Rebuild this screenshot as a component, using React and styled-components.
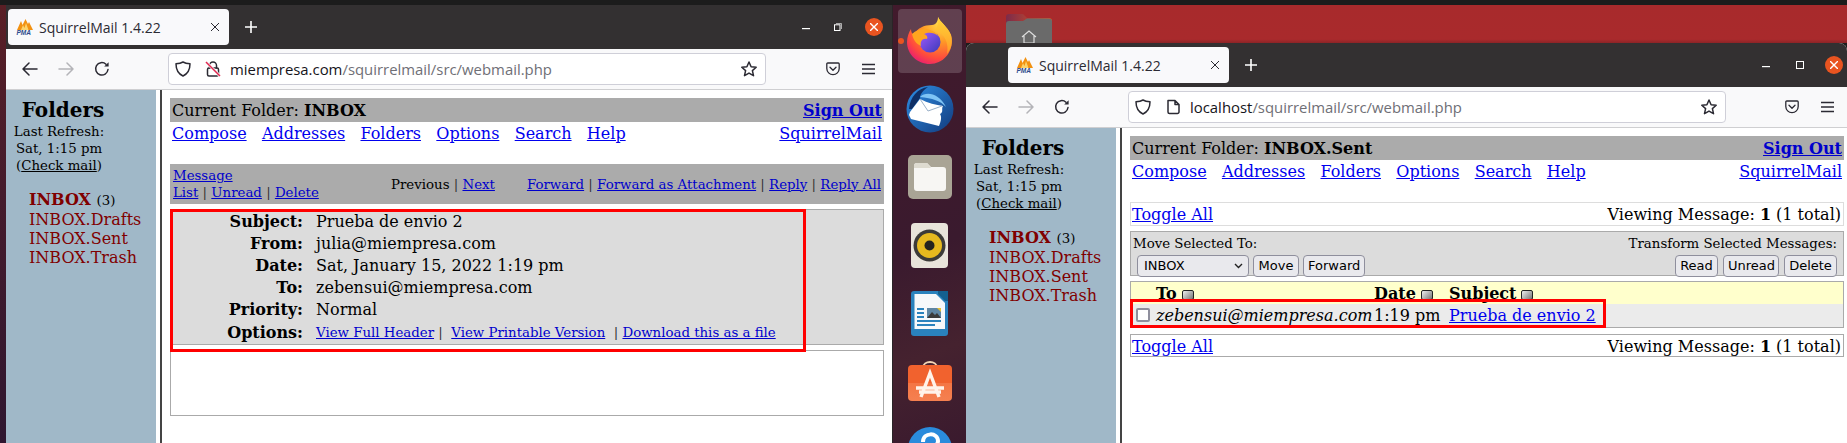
import React from "react";
import styled, { createGlobalStyle } from "styled-components";

const Global = createGlobalStyle`
  html, body { margin: 0; padding: 0; background: #1c1c1c; }
  * { box-sizing: border-box; }
`;

const serif = `"DejaVu Serif", serif`;
const ui = `"Open Sans", "Noto Sans", sans-serif`;

const Screen = styled.div`
  width: 1847px; height: 443px; overflow: hidden;
  display: flex; flex-direction: column; background: #1c1c1c;
`;
const TopStrip = styled.div`height: 5px; flex: none; background: #1c1c1c;`;
const Desktop = styled.div`flex: 1; min-height: 0; display: flex;`;
const EdgeStrip = styled.div`
  width: 6px; flex: none;
  background: linear-gradient(180deg, #5a1f25 0%, #4a1c2b 30%, #2f1630 100%);
`;
const WindowFrame = styled.div`
  width: ${p => p.$width}px; flex: ${p => (p.$fill ? "1 1 auto" : "none")}; min-height: 0;
  display: flex; flex-direction: column;
  border-radius: ${p => (p.$rounded ? "8px 8px 0 0" : "0")};
  overflow: hidden; background: #fff;
`;
const TitleBar = styled.div`
  height: 44px; flex: none; background: #333031;
  display: flex; align-items: center;
  padding-left: ${p => p.$tabLeft}px; padding-right: ${p => p.$right}px;
`;
const Tab = styled.div`
  width: 221px; height: 36px; background: #f9f9fb; border-radius: 4px;
  display: flex; align-items: center; padding: 0 10px 0 8px; gap: 5px;
  font: 14px ${ui}; color: #2b2a33;
`;
const TabTitle = styled.span`flex: 1; white-space: nowrap;`;
const NewTab = styled.div`margin-left: 16px; display: flex; align-items: center; width: 18px; height: 18px;`;
const WinControls = styled.div`
  margin-left: auto; display: flex; align-items: center;
`;
const WinBtn = styled.div`
  width: 18px; height: 18px; margin-left: ${p => p.$gap}px; display: flex;
  align-items: center; justify-content: center;
`;
const CloseBtn = styled(WinBtn)`background: #e95420; border-radius: 50%; `;
const Toolbar = styled.div`
  height: 41px; flex: none; background: #f9f9fa; border-bottom: 1px solid #cfcfd1;
  display: flex; align-items: center; padding-left: 14px; padding-right: ${p => p.$right}px;
`;
const NavBtn = styled.div`
  width: 20px; height: 20px; margin-right: 16px; display: flex; align-items: center; justify-content: center;
`;
const UrlBox = styled.div`
  width: 598px; height: 32px; margin-left: 40px; margin-top: -1px; background: #fff;
  border: 1px solid #cfcfd8; border-radius: 4px; flex: none;
  display: flex; align-items: center; padding: 0 8px 0 6px;
  font: 14.9px ${ui}; white-space: nowrap;
`;
const UrlIcon = styled.span`display: flex; margin-right: ${p => p.$gap}px;`;
const Host = styled.span`color: #15141a;`;
const UrlPath = styled.span`color: #6f6f76; flex: 1;`;
const ToolIcons = styled.div`margin-left: auto; display: flex; align-items: center; gap: 22px;`;
const PageGrid = styled.div`
  flex: 1; min-height: 0; display: grid; grid-template-columns: 150px 4px 2px 1fr; background: #fff;
  font: 16px/19px ${serif}; color: #000;
`;
const FolderPane = styled.div`background: #a0b8c8; padding-top: 8px;`;
const FolderHead = styled.div`
  width: 114px; text-align: center; font: bold 20px/24px ${serif};
`;
const RefreshInfo = styled.div`
  width: 106px; text-align: center; font: 13.33px/17px ${serif}; margin-top: 1px; color: #000;
`;
const CheckLink = styled.a`color: #000; text-decoration: underline;`;
const FolderList = styled.div`margin: 17px 0 0 23px; display: flex; flex-direction: column;`;
const FolderItem = styled.div`color: #800000; font-size: 16px; line-height: ${p => (p.$active ? 18 : 19)}px; font-weight: ${p => (p.$active ? 700 : 400)};`;
const UnreadCount = styled.span`color: #000; font-size: 13.33px; font-weight: 400;`;
const WhiteGap = styled.div`background: #fff;`;
const Divider = styled.div`background: #444;`;
const Main = styled.div`
  position: relative; padding: 8px ${p => p.$right}px 0 8px; display: flex; flex-direction: column;
`;
const FolderBar = styled.div`
  height: 24px; background: #ababab; display: flex; justify-content: space-between; align-items: center; padding: 0 2px;
`;
const Link = styled.a`color: ${p => p.$color || "#0000ee"}; text-decoration: underline; font-weight: ${p => (p.$bold ? 700 : 400)};`;
const NavRow = styled.div`
  height: 42px; display: flex; padding: 2px 2px 0; justify-content: space-between;
`;
const NavLinks = styled.div`display: flex; gap: 15.3px;`;
const MsgBar = styled.div`
  height: 40px; background: #ababab; display: grid; grid-template-columns: 218px auto 1fr;
  align-items: center; padding: 3px 3px 3px 3px; font-size: 13.33px; line-height: 17px;
`;
const Sep = styled.span`color: #333;`;
const MsgRight = styled.div`justify-self: end; white-space: nowrap;`;
const HeaderBox = styled.div`
  margin-top: 5px; height: 136px; background: #dcdcdc; border: 1px solid #aaa;
  padding-top: 1px; display: grid; grid-template-columns: 132px 1fr; grid-auto-rows: 22px; column-gap: 13px;
`;
const HeadLabel = styled.div`font-weight: 700; text-align: right; line-height: 22px; padding-top: ${p => p.$nudge || 0}px;`;
const HeadValue = styled.div`line-height: 21px; white-space: pre;`;
const OptionLinks = styled.div`font-size: 13.33px; line-height: 22px; white-space: pre; padding-top: 1px;`;
const BodyBox = styled.div`margin-top: 5px; height: 66px; border: 1px solid #aaa; background: #fff;`;
const ToggleBar = styled.div`
  height: ${p => p.$h}px; border: 1px solid ${p => p.$border}; margin-top: ${p => p.$top}px;
  display: flex; justify-content: space-between; align-items: center; padding: ${p => p.$padTop}px 2px 0 1px; background: #fff;
`;
const MoveBar = styled.div`
  height: 45px; margin-top: 5px; background: #dcdcdc; border: 1px solid #aaa;
  display: flex; justify-content: space-between; font-size: 13.33px; padding: 2px 6px 0 2px;
`;
const MoveCol = styled.div`display: flex; flex-direction: column; gap: 2px; align-items: ${p => p.$end ? "flex-end" : "flex-start"}; line-height: 19px;`;
const Controls = styled.div`display: flex; gap: ${p => p.$gap}px; padding-left: ${p => p.$left}px;`;
const FormButton = styled.div`
  height: 22px; padding: 0 4px; background: #e9e9ed; border: 1px solid #8f8f9d; border-radius: 4px;
  font: 13px/20px "DejaVu Sans", sans-serif; color: #000; text-align: center; width: ${p => p.$w}px;
`;
const FakeSelect = styled(FormButton)`
  width: 112px; display: flex; align-items: center; justify-content: space-between; padding: 0 5px 0 6px;
`;
const ListBox = styled.div`margin-top: 5px; height: 47px; border: 1px solid #aaa; background: #ebebeb; padding-bottom: 1px;`;
const ListRow = styled.div`
  display: grid; grid-template-columns: 25px 218px 75px 1fr; height: ${p => p.$h}px; background: ${p => p.$bg};
  align-items: center; white-space: nowrap;
`;
const SortHead = styled.div`font-weight: 700; display: flex; align-items: center; gap: 5px; line-height: 22px; padding-top: 1px;`;
const SortBtn = styled.span`
  width: 12px; height: 10px; border: 1px solid #222; border-radius: 2px; margin-top: 1px;
  background: linear-gradient(135deg, #eee, #777);
`;
const Checkbox = styled.span`
  width: 14px; height: 14px; border: 2px solid #8f8f9d; border-radius: 2px; background: #fff; margin-left: 5px; display: block;
`;
const Sender = styled.span`font-style: italic;`;
const RedBox = styled.div`
  position: absolute; pointer-events: none; border: 3px solid #ff0000;
  left: 8px; top: ${p => p.$top}px; width: ${p => p.$w}px; height: ${p => p.$h}px;
`;
const Dock = styled.div`
  width: 74px; flex: none; display: flex; flex-direction: column; align-items: center; gap: 4px; padding-top: 4px;
  background: linear-gradient(160deg, #421a2c 0%, #3a1a2e 55%, #45222f 78%, #3a1a2e 100%);
  border-left: 1px solid #2a2427;
`;
const DockSlot = styled.div`
  position: relative; width: 64px; height: 64px; flex: none; border-radius: 4px;
  display: flex; align-items: center; justify-content: center;
  background: ${p => (p.$active ? "rgba(255,255,255,.17)" : "transparent")};
`;
const RunDot = styled.span`
  position: absolute; left: 0; top: 29px; width: 6px; height: 6px; border-radius: 50%; background: #e95420;
`;
const RightDesk = styled.div`flex: 1; min-width: 0; min-height: 0; display: flex; flex-direction: column;`;
const Wallpaper = styled.div`
  height: 38px; flex: none; overflow: hidden; padding: 9px 0 0 40px;
  background: linear-gradient(180deg, #a82a2c 0%, #a92a2c 90%, #8c2427 100%);
`;

const IconS = { fill: "none", stroke: "#2b2a33", strokeWidth: 1.5, strokeLinecap: "round", strokeLinejoin: "round" };

const Favicon = () => (
  <svg width="18" height="18" viewBox="0 0 18 18">
    <path d="M1 12 L5 3 L6.5 7 L9.5 1 L12 6 L13 4 L17 12 Z" fill="#f29111" />
    <path d="M5 12 L7 7 L8.5 10 L10 5 L12.5 12 Z" fill="#fbd26a" />
    <text x="0.5" y="17" fontSize="6.5" fontWeight="700" fontStyle="italic" fontFamily="Liberation Sans, sans-serif" fill="#2c4a8c">PMA</text>
  </svg>
);
const Back = ({ c = "#2b2a33", flip }) => (
  <svg width="16" height="14" viewBox="0 0 16 14" style={flip ? { transform: "scaleX(-1)" } : undefined}>
    <path d="M7 1 L1 7 L7 13 M1 7 H15" {...IconS} stroke={c} />
  </svg>
);
const Reload = () => (
  <svg width="16" height="16" viewBox="0 0 16 16">
    <path d="M14 8.5 A6.2 6.2 0 1 1 12 3.2" {...IconS} />
    <path d="M14.6 1.2 V5.6 H10.2 Z" fill="#2b2a33" />
  </svg>
);
const Shield = () => (
  <svg width="16" height="16" viewBox="0 0 16 16">
    <path d="M8 1 C10 2.2 12 2.6 15 2.8 C15 9 12.5 13 8 15 C3.5 13 1 9 1 2.8 C4 2.6 6 2.2 8 1 Z" {...IconS} />
  </svg>
);
const BrokenLock = () => (
  <svg width="16" height="16" viewBox="0 0 16 16">
    <path d="M4.5 7 V4.5 A3.5 3.5 0 0 1 11.5 4.5 V7" {...IconS} />
    <rect x="2.5" y="7" width="11" height="8" rx="1.5" {...IconS} />
    <path d="M1 1 L15 15" stroke="#f9f9fa" strokeWidth="3" />
    <path d="M1 1 L15 15" stroke="#e22850" strokeWidth="1.5" />
  </svg>
);
const PageIcon = () => (
  <svg width="16" height="16" viewBox="0 0 16 16">
    <path d="M3 1.5 H10 L14 5.5 V13 A1.5 1.5 0 0 1 12.5 14.5 H4.5 A1.5 1.5 0 0 1 3 13 Z M10 1.5 V5.5 H14" {...IconS} />
  </svg>
);
const Star = () => (
  <svg width="16" height="16" viewBox="0 0 16 16">
    <path d="M8 1 L10.1 5.7 L15.2 6.2 L11.4 9.6 L12.5 14.7 L8 12.1 L3.5 14.7 L4.6 9.6 L0.8 6.2 L5.9 5.7 Z" {...IconS} />
  </svg>
);
const Pocket = () => (
  <svg width="14" height="14" viewBox="0 0 14 14">
    <path d="M1.8 1 H12.2 A1 1 0 0 1 13.2 2 V6.5 A6.2 6.2 0 0 1 0.8 6.5 V2 A1 1 0 0 1 1.8 1 Z M4 5.2 L7 8.2 L10 5.2" {...IconS} strokeWidth="1.3" />
  </svg>
);
const Menu = () => (
  <svg width="13" height="12" viewBox="0 0 13 12">
    <path d="M0 1.5 H13 M0 6 H13 M0 10.5 H13" stroke="#2b2a33" strokeWidth="1.3" />
  </svg>
);
const Plus = () => (
  <svg width="12" height="12" viewBox="0 0 12 12">
    <path d="M6 0 V12 M0 6 H12" stroke="#fff" strokeWidth="1.6" />
  </svg>
);
const TabClose = () => (
  <svg width="8" height="8" viewBox="0 0 8 8"><path d="M0 0 L8 8 M8 0 L0 8" stroke="#2b2a33" strokeWidth="1" /></svg>
);
const Min = () => <svg width="8" height="2" viewBox="0 0 8 2" style={{ marginTop: 4 }}><rect width="8" height="1.2" fill="#fff" /></svg>;
const Max = () => <svg width="8" height="8" viewBox="0 0 8 8"><rect x=".5" y=".5" width="7" height="7" fill="none" stroke="#fff" /></svg>;
const Restore = () => (
  <svg width="8" height="8" viewBox="0 0 8 8">
    <path d="M2 0.5 H7.5 V6" fill="none" stroke="#ccc" strokeWidth="0.8" />
    <rect x=".5" y="1.8" width="5.5" height="5.7" fill="none" stroke="#fff" />
  </svg>
);
const XMark = () => <svg width="8" height="8" viewBox="0 0 8 8"><path d="M0 0 L8 8 M8 0 L0 8" stroke="#fff" strokeWidth="1.4" /></svg>;
const Chevron = () => <svg width="9" height="6" viewBox="0 0 9 6"><path d="M1 1 L4.5 4.5 L8 1" fill="none" stroke="#222" strokeWidth="1.4" /></svg>;

const FirefoxIcon = () => (
  <svg width="46" height="48" viewBox="0 0 46 48">
    <defs>
      <radialGradient id="ffb" cx=".75" cy=".1" r="1.05">
        <stop offset="0" stopColor="#ffe14d" /><stop offset=".4" stopColor="#ff9a26" />
        <stop offset=".75" stopColor="#ff4a3d" /><stop offset="1" stopColor="#e3137f" />
      </radialGradient>
      <linearGradient id="ffg" x1="0" y1="0" x2="1" y2="1">
        <stop offset="0" stopColor="#a45cff" /><stop offset="1" stopColor="#3a39b8" />
      </linearGradient>
      <linearGradient id="ffy" x1="0" y1="0" x2="0" y2="1">
        <stop offset="0" stopColor="#ffd53a" /><stop offset="1" stopColor="#ff9a26" />
      </linearGradient>
    </defs>
    <path d="M31 0 C33 5 40 9 44 18 C48 32 38 47 23 47 C10 47 0 37 0 25 C0 20 2 15 4 12 C4 15 5 17 7 18 C10 11 17 8 25 8 C29 8 31 4 31 0 Z" fill="url(#ffb)" />
    <path d="M31 0 C33 5 40 9 44 18 C46 26 44 32 40 37 C42 26 38 17 28 13 C31 9 32 4 31 0 Z" fill="url(#ffy)" />
    <circle cx="23" cy="25" r="10.5" fill="url(#ffg)" />
    <path d="M5 17 C10 12 18 11 23 13 C26 14 30 16 31 19 C27 15 21 15 17 17 C20 18 21 20 20 22 C15 21 13 25 14 29 C9 27 6 22 5 17 Z" fill="#ffa51f" />
  </svg>
);
const ThunderbirdIcon = () => (
  <svg width="48" height="48" viewBox="0 0 48 48">
    <defs>
      <linearGradient id="tb" x1="0" y1="0" x2="1" y2="1">
        <stop offset="0" stopColor="#2e8fe6" /><stop offset="1" stopColor="#123a7c" />
      </linearGradient>
    </defs>
    <circle cx="24" cy="24" r="23.5" fill="url(#tb)" />
    <path d="M3 24 C4 12 12 3 22 2 C16 6 14 10 14 13 L6 24 Z" fill="#0f2f66" />
    <path d="M3 30 L4 27 L14 14 C22 18 30 20 37 21 C35 24 38 27 34 29 C36 32 35 36 33 41 L5 34 Z" fill="#fff" />
    <path d="M14 14 L22 26 L36 21" fill="none" stroke="#9ab0c8" strokeWidth="1" />
    <path d="M14 12 C20 6 33 8 40 22 C35 16 26 13 14 12 Z" fill="#7fc4f5" />
  </svg>
);
const FilesIcon = () => (
  <svg width="44" height="44" viewBox="0 0 44 44">
    <rect width="44" height="44" rx="5" fill="#a9a495" />
    <path d="M6 11 A3 3 0 0 1 9 8 H19 L23 12 H35 A3 3 0 0 1 38 15 V33 A3 3 0 0 1 35 36 H9 A3 3 0 0 1 6 33 Z" fill="#f7f6f3" />
    <path d="M6 13 H23 L19 8 H9 A3 3 0 0 0 6 11 Z" fill="#dedbd0" />
  </svg>
);
const RhythmIcon = () => (
  <svg width="37" height="45" viewBox="0 0 37 45">
    <rect width="37" height="45" rx="4" fill="#e8e4da" />
    <circle cx="18.5" cy="22.5" r="16" fill="#3c3b38" />
    <circle cx="18.5" cy="22.5" r="12.5" fill="#e6b91e" />
    <circle cx="18.5" cy="22.5" r="5" fill="#24231f" />
  </svg>
);
const WriterIcon = () => (
  <svg width="37" height="45" viewBox="0 0 37 45">
    <path d="M3 0 H27 L37 10 V42 A3 3 0 0 1 34 45 H3 A3 3 0 0 1 0 42 V3 A3 3 0 0 1 3 0 Z" fill="#2a82bd" />
    <path d="M3.5 3 H25 L34 12 V38 H3.5 Z" fill="#f6f8fa" />
    <path d="M27 0 H37 V10 H34 L27 3 Z" fill="#14608f" />
    <rect x="16" y="17" width="14" height="10" fill="#5f86a3" />
    <path d="M16 27 L21 21 L24 24 L26 22 L30 27 Z" fill="#3a3a3a" />
    <path d="M26 17 H30 V21 Z" fill="#e8c234" />
    <path d="M6 18 H13 M6 22 H13 M6 26 H13 M6 30 H30 M6 34 H24" stroke="#2a82bd" strokeWidth="2" />
  </svg>
);
const StoreIcon = () => (
  <svg width="44" height="44" viewBox="0 0 44 44">
    <defs>
      <linearGradient id="sg" x1="0" y1="0" x2="0" y2="1">
        <stop offset="0" stopColor="#f1622e" /><stop offset=".5" stopColor="#f1622e" />
        <stop offset=".5" stopColor="#f47645" /><stop offset="1" stopColor="#f58050" />
      </linearGradient>
    </defs>
    <path d="M15 9 C15 1 29 1 29 9" fill="none" stroke="#f3d5b5" strokeWidth="2" />
    <rect y="6" width="44" height="36" rx="4" fill="url(#sg)" />
    <path d="M13 38 L22 14 L31 38 M8 29 H36 M11 33 H33" fill="none" stroke="#fff3ea" strokeWidth="3.4" />
  </svg>
);
const HelpIcon = () => (
  <svg width="44" height="44" viewBox="0 0 44 44">
    <circle cx="22" cy="22" r="22" fill="#2a8bdc" />
    <path d="M15 15 C15 5 30 5 30 14 C30 20 22 20 22 27" fill="none" stroke="#fff" strokeWidth="4" />
  </svg>
);
const HomeFolder = () => (
  <svg width="46" height="34" viewBox="0 0 46 34" style={{ display: "block" }}>
    <defs>
      <linearGradient id="hf" x1="0" y1="0" x2="1" y2="0">
        <stop offset="0" stopColor="#7c2b4a" /><stop offset="1" stopColor="#e2571f" />
      </linearGradient>
    </defs>
    <path d="M0 3 A3 3 0 0 1 3 0 H17 L21 4 H43 A3 3 0 0 1 46 7 V20 H0 Z" fill="url(#hf)" />
    <path d="M0 10 A3 3 0 0 1 3 7 H17 L21 4.5 H43 A3 3 0 0 1 46 7.5 V34 H0 Z" fill="#6a6a6a" />
    <path d="M16 23 L23 17 L30 23 M18 22 V29 H28 V22" fill="none" stroke="#ddd" strokeWidth="1.2" />
  </svg>
);

const Browser = ({ width, fill, tabLeft, barRight, toolRight, rounded, secure, host, restore, mainRight, children }) => (
  <WindowFrame $width={width} $fill={fill} $rounded={rounded}>
    <TitleBar $tabLeft={tabLeft} $right={barRight}>
      <Tab>
        <Favicon />
        <TabTitle>SquirrelMail 1.4.22</TabTitle>
        <TabClose />
      </Tab>
      <NewTab><Plus /></NewTab>
      <WinControls>
        <WinBtn $gap={0}><Min /></WinBtn>
        <WinBtn $gap={restore ? 14 : 16}>{restore ? <Restore /> : <Max />}</WinBtn>
        <CloseBtn $gap={restore ? 18 : 16}><XMark /></CloseBtn>
      </WinControls>
    </TitleBar>
    <Toolbar $right={toolRight}>
      <NavBtn><Back /></NavBtn>
      <NavBtn><Back c="#b4b4b8" flip /></NavBtn>
      <NavBtn><Reload /></NavBtn>
      <UrlBox>
        <UrlIcon $gap={14}><Shield /></UrlIcon>
        <UrlIcon $gap={9}>{secure ? <PageIcon /> : <BrokenLock />}</UrlIcon>
        <Host>{host}</Host>
        <UrlPath>/squirrelmail/src/webmail.php</UrlPath>
        <Star />
      </UrlBox>
      <ToolIcons><Pocket /><Menu /></ToolIcons>
    </Toolbar>
    <PageGrid>
      <FolderPane>
        <FolderHead>Folders</FolderHead>
        <RefreshInfo>
          Last Refresh:<br />Sat, 1:15 pm<br />(<CheckLink>Check mail</CheckLink>)
        </RefreshInfo>
        <FolderList>
          <FolderItem $active>INBOX <UnreadCount>(3)</UnreadCount></FolderItem>
          <FolderItem>INBOX.Drafts</FolderItem>
          <FolderItem>INBOX.Sent</FolderItem>
          <FolderItem>INBOX.Trash</FolderItem>
        </FolderList>
      </FolderPane>
      <WhiteGap />
      <Divider />
      <Main $right={mainRight}>{children}</Main>
    </PageGrid>
  </WindowFrame>
);

const TopNav = ({ folder }) => (
  <>
    <FolderBar>
      <span>Current Folder: <b>{folder}</b></span>
      <Link $bold $color="#0000cc">Sign Out</Link>
    </FolderBar>
    <NavRow>
      <NavLinks>
        {["Compose", "Addresses", "Folders", "Options", "Search", "Help"].map(t => <Link key={t}>{t}</Link>)}
      </NavLinks>
      <Link>SquirrelMail</Link>
    </NavRow>
  </>
);

const headers = [
  ["Subject:", "Prueba de envio 2"],
  ["From:", "julia@miempresa.com"],
  ["Date:", "Sat, January 15, 2022 1:19 pm"],
  ["To:", "zebensui@miempresa.com"],
  ["Priority:", "Normal"],
];

const MessageView = () => (
  <>
    <TopNav folder="INBOX" />
    <MsgBar>
      <div>
        <Link $color="#0000cc">Message</Link><br />
        <Link $color="#0000cc">List</Link> <Sep>|</Sep> <Link $color="#0000cc">Unread</Link> <Sep>|</Sep> <Link $color="#0000cc">Delete</Link>
      </div>
      <div>Previous <Sep>|</Sep> <Link $color="#0000cc">Next</Link></div>
      <MsgRight>
        <Link $color="#0000cc">Forward</Link> <Sep>|</Sep> <Link $color="#0000cc">Forward as Attachment</Link> <Sep>|</Sep> <Link $color="#0000cc">Reply</Link> <Sep>|</Sep> <Link $color="#0000cc">Reply All</Link>
      </MsgRight>
    </MsgBar>
    <HeaderBox>
      {headers.map(([k, v]) => (
        <React.Fragment key={k}>
          <HeadLabel>{k}</HeadLabel>
          <HeadValue>{v}</HeadValue>
        </React.Fragment>
      ))}
      <HeadLabel $nudge={1}>Options:</HeadLabel>
      <OptionLinks>
        <Link $color="#0000cc">View Full Header</Link> <Sep>|</Sep>{"  "}<Link $color="#0000cc">View Printable Version</Link>{"  "}<Sep>|</Sep> <Link $color="#0000cc">Download this as a file</Link>
      </OptionLinks>
    </HeaderBox>
    <BodyBox />
    <RedBox $top={119} $w={636} $h={143} />
  </>
);

const Viewing = () => <span>Viewing Message: <b>1</b> (1 total)</span>;

const ListView = () => (
  <>
    <TopNav folder="INBOX.Sent" />
    <ToggleBar $h={24} $border="#ddd" $top={0} $padTop={0}><Link>Toggle All</Link><Viewing /></ToggleBar>
    <MoveBar>
      <MoveCol>
        <span>Move Selected To:</span>
        <Controls $gap={4} $left={4}>
          <FakeSelect>INBOX<Chevron /></FakeSelect>
          <FormButton $w={46}>Move</FormButton>
          <FormButton $w={62}>Forward</FormButton>
        </Controls>
      </MoveCol>
      <MoveCol $end>
        <span>Transform Selected Messages:</span>
        <Controls $gap={5} $left={0}>
          <FormButton $w={43}>Read</FormButton>
          <FormButton $w={56}>Unread</FormButton>
          <FormButton $w={53}>Delete</FormButton>
        </Controls>
      </MoveCol>
    </MoveBar>
    <ListBox>
      <ListRow $h={22} $bg="#ffffcc">
        <span />
        <SortHead>To <SortBtn /></SortHead>
        <SortHead>Date <SortBtn /></SortHead>
        <SortHead>Subject <SortBtn /></SortHead>
      </ListRow>
      <ListRow $h={22} $bg="#ebebeb">
        <Checkbox />
        <Sender>zebensui@miempresa.com</Sender>
        <span>1:19 pm</span>
        <Link>Prueba de envio 2</Link>
      </ListRow>
    </ListBox>
    <ToggleBar $h={23} $border="#aaa" $top={6} $padTop={1}><Link>Toggle All</Link><Viewing /></ToggleBar>
    <RedBox $top={171} $w={476} $h={29} />
  </>
);

export default function App() {
  return (
    <Screen>
      <Global />
      <TopStrip />
      <Desktop>
        <EdgeStrip />
        <Browser width={886} tabLeft={2} barRight={9} toolRight={17} restore host="miempresa.com" mainRight={8}>
          <MessageView />
        </Browser>
        <Dock>
          <DockSlot $active><RunDot /><FirefoxIcon /></DockSlot>
          <DockSlot><ThunderbirdIcon /></DockSlot>
          <DockSlot><FilesIcon /></DockSlot>
          <DockSlot><RhythmIcon /></DockSlot>
          <DockSlot><WriterIcon /></DockSlot>
          <DockSlot><StoreIcon /></DockSlot>
          <DockSlot><HelpIcon /></DockSlot>
        </Dock>
        <RightDesk>
          <Wallpaper><HomeFolder /></Wallpaper>
          <Browser width={881} fill tabLeft={42} barRight={4} toolRight={13} rounded secure host="localhost" mainRight={3}>
            <ListView />
          </Browser>
        </RightDesk>
      </Desktop>
    </Screen>
  );
}
